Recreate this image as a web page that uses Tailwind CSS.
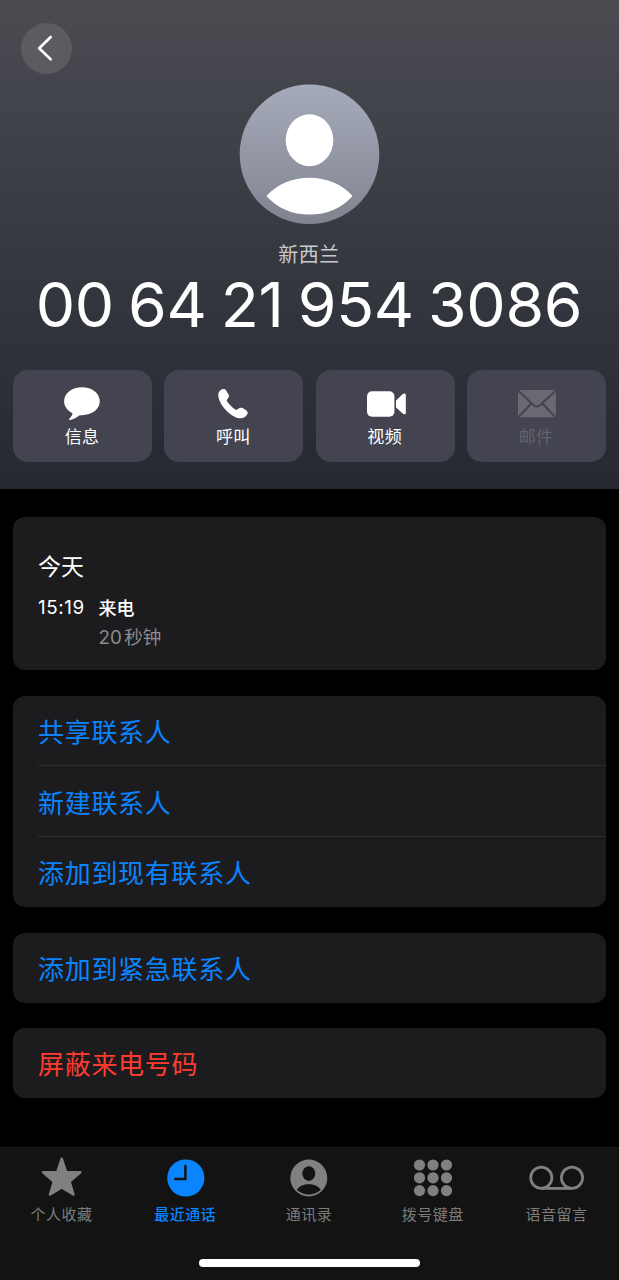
<!DOCTYPE html>
<html lang="zh-CN">
<head>
<meta charset="utf-8">
<meta name="viewport" content="width=device-width, initial-scale=1">
<title>最近通话</title>
<script src="https://cdn.jsdelivr.net/npm/@tailwindcss/browser@4"></script>
</head>
<body class="bg-black">
<div class="flex h-[1280px] w-[619px] flex-col overflow-hidden bg-black font-['Inter','Noto_Sans_CJK_SC',sans-serif] text-white">

  <!-- Contact header -->
  <header class="relative flex h-[489px] shrink-0 flex-col items-center bg-linear-to-b from-[#4b4c52] via-[#373941] to-[#262932] px-[13px] pt-[84px]">
    <button class="absolute top-[23px] left-[20.5px] flex size-[51px] items-center justify-center rounded-full bg-[#5a5c60]" aria-label="返回">
      <svg class="size-[51px]" viewBox="0 0 51 51" fill="none" stroke="#fff" stroke-width="2.7" stroke-linecap="round" stroke-linejoin="round"><path d="M29.7 14 L18.2 25.2 L29.7 36.4"/></svg>
    </button>
    <svg class="size-[141px] shrink-0" viewBox="0 0 141 141">
      <defs><linearGradient id="av" x1="0" y1="0" x2="0" y2="1"><stop offset="0" stop-color="#a6abbb"/><stop offset="1" stop-color="#81848f"/></linearGradient></defs>
      <circle cx="70.5" cy="70.3" r="69.8" fill="url(#av)"/>
      <ellipse cx="70.5" cy="56.2" rx="23.8" ry="26" fill="#fff"/>
      <path d="M27.5 112 C38 100 53 93.7 70.5 93.7 C88 93.7 103 100 113.5 112 C103 124 88 130.6 70.5 130.6 C53 130.6 38 124 27.5 112Z" fill="#fff"/>
    </svg>
    <p class="mt-[14px] h-[30px] pr-px text-[20px] leading-[30px] tracking-[0.5px] text-[#c9cacd] font-['Noto_Sans_CJK_SC',sans-serif]">新西兰</p>
    <h1 class="h-[72px] pr-px text-[62.5px] leading-[70px] font-normal tracking-[-0.3px] whitespace-nowrap [word-spacing:-3.2px]">00 64 21 954 3086</h1>
    <div class="mt-[29px] grid w-full grid-cols-4 gap-x-[12.4px] text-center font-['Noto_Sans_CJK_SC',sans-serif] text-[17px]">
      <div class="flex h-[92px] flex-col items-center rounded-[15px] bg-[#434450] pt-[13px]">
        <svg class="h-[40px] w-[44px] shrink-0" viewBox="0 0 44 40" fill="#fff"><path d="M22 4.3 C12 4.3 4.1 10.4 4.1 18.3 C4.1 23 7 27.2 11.7 29.8 C12.6 30.4 12.6 31 12 32.3 C11.2 33.8 10 34.8 9.3 35.7 C8.7 36.6 9.2 37 10.2 36.9 C13.5 36.6 16.9 34.1 18.8 32.7 C19.8 32.1 20.7 32.2 22 32.2 C32 32.2 39.8 26.1 39.8 18.3 C39.8 10.4 32 4.3 22 4.3Z"/></svg>
        <span class="h-[26px] pr-px leading-[26px] tracking-[0.3px]">信息</span>
      </div>
      <div class="flex h-[92px] flex-col items-center rounded-[15px] bg-[#434450] pt-[13px]">
        <svg class="h-[40px] w-[44px] shrink-0" viewBox="0 0 132 120" fill="#fff"><path d="M33 18 C25 20 18 27 19 38 C22 70 62 107 87 106 C97 106 104 99 107 91 C108 87 105 83 100 80 L92 75 C87 73 83 74 79 77 C76 80 73 82 69 79 C62 74 52 65 46 56 C43 52 44 50 47 47 C52 42 52 38 49 33 L42 22 C39 18 37 17 33 18Z"/></svg>
        <span class="h-[26px] pr-px leading-[26px] tracking-[0.3px]">呼叫</span>
      </div>
      <div class="flex h-[92px] flex-col items-center rounded-[15px] bg-[#434450] pt-[13px]">
        <svg class="h-[40px] w-[44px] shrink-0" viewBox="0 0 44 40" fill="#fff"><rect x="4" y="8.2" width="27.4" height="25.6" rx="5"/><path d="M33 17.5 L39.5 11.3 C41 10 42.8 10.2 42.8 12 V29.8 C42.8 31.5 41.2 31.9 39.7 30.6 L33 24.5Z"/></svg>
        <span class="h-[26px] pr-px leading-[26px] tracking-[0.3px]">视频</span>
      </div>
      <div class="flex h-[92px] flex-col items-center rounded-[15px] bg-[#434450] pt-[13px] text-[#62636d]">
        <svg class="h-[40px] w-[44px] shrink-0" viewBox="0 0 44 40"><rect x="3" y="7" width="37.8" height="27.2" rx="2" fill="#686971"/><path d="M3.5 8 L18.4 22 Q21.8 25 25.2 22 L40.3 8 M4 33.5 L16.3 20.5 M39.8 33.5 L27.4 20.5" fill="none" stroke="#434450" stroke-width="2"/></svg>
        <span class="h-[26px] pr-px leading-[26px] tracking-[0.3px]">邮件</span>
      </div>
    </div>
  </header>

  <main class="flex flex-1 flex-col gap-[26px] px-[13px] pt-[28px] font-['Noto_Sans_CJK_SC',sans-serif] text-[26px] tracking-[0.7px] text-[#0a84ff]">
    <!-- Call log -->
    <section class="h-[153px] shrink-0 rounded-[12px] bg-[#1c1c1e] px-[25px] pt-[32px] tracking-normal text-white">
      <h2 class="h-[42px] text-[23px] leading-[32px]">今天</h2>
      <div class="flex text-[18px]">
        <time class="w-[60.5px] font-['Inter'] text-[18.8px] leading-[33px] tracking-[0.6px]">15:19</time>
        <div>
          <p class="h-[29px] leading-[32px] font-medium">来电</p>
          <p class="text-[18.5px] leading-[32px] text-[#8b8b90]"><span class="mr-[2.5px] font-['Inter'] text-[18.8px]">20</span>秒钟</p>
        </div>
      </div>
    </section>

    <!-- Contact actions -->
    <section class="h-[211px] shrink-0 rounded-[12px] bg-[#1c1c1e] pl-[25px]">
      <div class="h-[70px] border-b border-[#2f2f32] leading-[69px]">共享联系人</div>
      <div class="h-[71px] border-b border-[#2f2f32] leading-[71px]">新建联系人</div>
      <div class="h-[70px] leading-[69px]">添加到现有联系人</div>
    </section>
    <section class="h-[70px] shrink-0 rounded-[12px] bg-[#1c1c1e] pl-[25px] leading-[69px]">添加到紧急联系人</section>
    <section class="-mt-px h-[70px] shrink-0 rounded-[12px] bg-[#1c1c1e] pl-[25px] leading-[70px] text-[#ff3b30]">屏蔽来电号码</section>
  </main>

  <!-- Tab bar -->
  <nav class="flex h-[133px] shrink-0 flex-col items-center border-t border-[#1b1b1b] bg-[#131313] font-['Noto_Sans_CJK_SC',sans-serif] text-[15px] tracking-[0.5px] text-[#7c7c7c]">
    <div class="grid h-[111px] w-full grid-cols-5 pt-[7px]">
      <div class="flex flex-col items-center">
        <svg class="h-[46px] w-[60px]" viewBox="0 0 60 46" fill="#808080" stroke="#808080" stroke-width="2.6" stroke-linejoin="round"><path d="M29.7 3.9 L34.1 17.2 L48.3 17.3 L37.5 26.5 L41.4 39.5 L29.7 32.3 L18 39.5 L21.9 26.5 L11.1 17.3 L25.3 17.2Z"/></svg>
        <span class="pr-px leading-[26px]">个人收藏</span>
      </div>
      <div class="flex flex-col items-center font-medium text-[#0a84ff]">
        <svg class="h-[46px] w-[60px]" viewBox="0 0 60 46"><circle cx="29.8" cy="23" r="18.6" fill="#0a84ff"/><path d="M29.4 11 V24.1 H19.2" fill="none" stroke="#131313" stroke-width="2.5" stroke-linejoin="round" stroke-linecap="round"/></svg>
        <span class="pr-px leading-[26px]">最近通话</span>
      </div>
      <div class="flex flex-col items-center">
        <svg class="h-[46px] w-[60px]" viewBox="0 0 60 46"><circle cx="29.8" cy="23" r="18.5" fill="#808080"/><ellipse cx="29.8" cy="18.6" rx="6.5" ry="7.3" fill="#131313"/><path d="M17.8 34.8 C20.5 30.8 25 29.2 29.8 29.2 C34.6 29.2 39.1 30.8 41.8 34.8 C38.6 38 34.3 39.5 29.8 39.5 C25.3 39.5 21 38 17.8 34.8Z" fill="#131313"/></svg>
        <span class="pr-px leading-[26px]">通讯录</span>
      </div>
      <div class="flex flex-col items-center">
        <svg class="h-[46px] w-[60px]" viewBox="0 0 60 46" fill="#808080"><circle cx="16.5" cy="10" r="5.6"/><circle cx="30" cy="10" r="5.6"/><circle cx="43.5" cy="10" r="5.6"/><circle cx="16.5" cy="22.8" r="5.6"/><circle cx="30" cy="22.8" r="5.6"/><circle cx="43.5" cy="22.8" r="5.6"/><circle cx="16.5" cy="35.6" r="5.6"/><circle cx="30" cy="35.6" r="5.6"/><circle cx="43.5" cy="35.6" r="5.6"/></svg>
        <span class="pr-px leading-[26px]">拨号键盘</span>
      </div>
      <div class="flex flex-col items-center">
        <svg class="h-[46px] w-[60px]" viewBox="0 0 60 46" fill="none" stroke="#808080" stroke-width="2.8"><circle cx="14.3" cy="22.8" r="10.6"/><circle cx="45" cy="22.8" r="10.6"/><path d="M14.3 33.4 H45"/></svg>
        <span class="pr-px leading-[26px]">语音留言</span>
      </div>
    </div>
    <div class="h-[8px] w-[221px] shrink-0 rounded-full bg-white"></div>
  </nav>
</div>
</body>
</html>
